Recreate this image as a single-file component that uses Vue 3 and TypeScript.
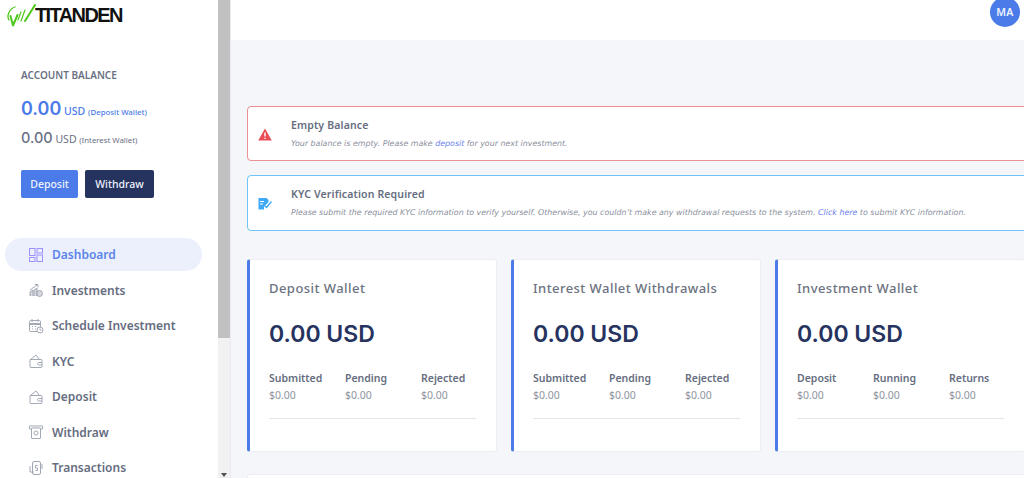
<script setup lang="ts">
interface Stat { label: string; value: string }
interface Card { title: string; amount: string; stats: Stat[] }

const nav = ['Dashboard', 'Investments', 'Schedule Investment', 'KYC', 'Deposit', 'Withdraw', 'Transactions']

const zero = '$0.00'
const cards: Card[] = [
  { title: 'Deposit Wallet', amount: '0.00 USD', stats: [{ label: 'Submitted', value: zero }, { label: 'Pending', value: zero }, { label: 'Rejected', value: zero }] },
  { title: 'Interest Wallet Withdrawals', amount: '0.00 USD', stats: [{ label: 'Submitted', value: zero }, { label: 'Pending', value: zero }, { label: 'Rejected', value: zero }] },
  { title: 'Investment Wallet', amount: '0.00 USD', stats: [{ label: 'Deposit', value: zero }, { label: 'Running', value: zero }, { label: 'Returns', value: zero }] },
]
</script>

<template>
  <div class="page">
    <aside class="sidebar">
      <div class="side-content">
        <div class="logo">
          <svg class="logo-mark" width="29" height="23" viewBox="0 0 29 23" fill="none" stroke="#4fc81e" stroke-linecap="round" stroke-linejoin="round">
            <path d="M8 3C2 5-.5 12 2 16" stroke-width="1.300" />
            <path d="M3.500 12L6 21.500 10.500 11" stroke-width="2" />
            <path d="M11 16l3-8M14 17l4-11" stroke-width="1.200" />
            <path d="M18 17L28 1" stroke-width="2" />
          </svg>
          <span class="logo-text">TITANDEN</span>
        </div>

        <div class="balance">
          <h6 class="balance-title">ACCOUNT BALANCE</h6>
          <div class="bal-main"><b>0.00</b> <span class="cur">USD</span> <small>(Deposit Wallet)</small></div>
          <div class="bal-sub"><b>0.00</b> <span class="cur">USD</span> <small>(Interest Wallet)</small></div>
          <div class="actions">
            <a class="btn btn-blue">Deposit</a>
            <a class="btn btn-navy">Withdraw</a>
          </div>
        </div>

        <nav class="nav">
          <a v-for="(item, i) in nav" :key="item" class="nav-item" :class="{ active: i === 0 }">
            <svg class="nav-icon" width="16" height="16" viewBox="0 0 16 16" fill="none" stroke="currentColor" stroke-width="1">
              <template v-if="i === 0">
                <rect x="1.500" y="1.500" width="5.500" height="7" />
                <rect x="9" y="1.500" width="5.500" height="4.500" />
                <rect x="1.500" y="10.500" width="5.500" height="4" />
                <rect x="9" y="8" width="5.500" height="6.500" />
              </template>
              <template v-else-if="i === 1">
                <path d="M2 14V10l3-2v6M6 14V8l3-2v8" fill="currentColor" fill-opacity=".45" />
                <path d="M2 8l7-5M7 2.500h3v3" />
                <circle cx="11.500" cy="11.500" r="3" fill="currentColor" fill-opacity=".45" />
              </template>
              <template v-else-if="i === 2">
                <rect x="1.500" y="2.500" width="11" height="11" rx="1" />
                <path d="M1.500 6h11" stroke-width="2" />
                <path d="M4 1v3M10 1v3M4 8.500h1M7 8.500h1M4 11h1M7 11h1" />
                <circle cx="12" cy="12" r="3" fill="#fff" />
                <path d="M12 10.500V12h1.500" />
              </template>
              <template v-else-if="i === 3 || i === 4">
                <path d="M2 6.500h11a1 1 0 0 1 1 1v6a1 1 0 0 1-1 1H3a1 1 0 0 1-1-1z" />
                <path d="M2.500 6.500L8 2l3.500 4.500" />
                <path d="M14 9.500h-3.500a1.300 1.300 0 0 0 0 2.500H14" />
              </template>
              <template v-else-if="i === 5">
                <path d="M1.500 2h13v3h-2M1.500 2v3h2" />
                <rect x="3.500" y="4" width="9" height="10.500" rx=".5" />
                <circle cx="8" cy="9" r="2" />
              </template>
              <template v-else>
                <rect x="4.500" y="1.500" width="8" height="13" rx="1.500" />
                <path d="M2 6v6h4M14 4v5" />
                <path d="M9.500 5.500h-2v2.500h2v2.500h-2" />
              </template>
            </svg>
            <span>{{ item }}</span>
          </a>
        </nav>
      </div>
      <div class="scrollbar">
        <div class="thumb"></div>
        <div class="arrow"></div>
      </div>
    </aside>

    <div class="main">
      <header class="topbar">
        <div class="avatar">MA</div>
      </header>

      <div class="content">
        <div class="alert alert-red">
          <svg class="alert-icon" width="14" height="13" viewBox="0 0 14 13"><path d="M7 .5L13.800 12.500H.2z" fill="#ea4d55" /><path d="M7 4.500v4M7 9.700v1.300" stroke="#fff" stroke-width="1.400" /></svg>
          <div>
            <h5 class="alert-title">Empty Balance</h5>
            <p class="alert-text">Your balance is empty. Please make <a>deposit</a> for your next investment.</p>
          </div>
        </div>
        <div class="alert alert-blue">
          <svg class="alert-icon" width="14" height="13" viewBox="0 0 14 13"><path d="M.5 1h8l2 2v2L6 10v2.500H.5z" fill="#3fa9f5" /><path d="M7 9l1.500 1.500L13.500 4.500" fill="none" stroke="#3fa9f5" stroke-width="1.500" /><path d="M2 4.500h4M2 7h3" stroke="#fff" /></svg>
          <div>
            <h5 class="alert-title">KYC Verification Required</h5>
            <p class="alert-text">Please submit the required KYC information to verify yourself. Otherwise, you couldn’t make any withdrawal requests to the system. <a>Click here</a> to submit KYC information.</p>
          </div>
        </div>

        <div class="cards">
          <section v-for="card in cards" :key="card.title" class="card">
            <h4 class="card-title">{{ card.title }}</h4>
            <div class="amount">{{ card.amount }}</div>
            <div class="stats">
              <div v-for="s in card.stats" :key="s.label" class="stat">
                <div class="stat-label">{{ s.label }}</div>
                <div class="stat-value">{{ s.value }}</div>
              </div>
            </div>
            <div class="rule"></div>
          </section>
        </div>

        <div class="next-card"></div>
      </div>
    </div>
  </div>
</template>

<style>
html, body { margin: 0; overflow: hidden; }
</style>

<style scoped>
.page {
  width: 1024px;
  height: 478px;
  overflow: hidden;
  display: flex;
  background: #f4f6fa;
  font-family: "Noto Sans", "DejaVu Sans", sans-serif;
  color: #52596d;
}
h4, h5, h6, p { margin: 0; }

.sidebar {
  flex: 0 0 231px;
  display: flex;
  background: #fff;
  border-right: 1px solid #e9ebf0;
  box-sizing: border-box;
}
.side-content { width: 218px; flex: none; }
.scrollbar {
  flex: 1;
  background: #f1f1f1;
  position: relative;
}
.thumb { height: 338px; background: #c1c1c1; }
.arrow {
  position: absolute;
  left: 3px;
  bottom: 1px;
  border-left: 3.500px solid transparent;
  border-right: 3.500px solid transparent;
  border-top: 4px solid #505050;
}

.logo { display: flex; align-items: center; height: 30px; padding-left: 7px; box-sizing: border-box; }
.logo-mark { flex: none; }
.logo-text {
  font-family: "Liberation Sans", sans-serif;
  font-size: 20px;
  font-weight: 700;
  letter-spacing: -1.600px;
  color: #111;
  margin-left: -1px;
}

.balance { padding: 39px 0 0 21px; }
.balance-title { font-size: 10px; font-weight: 600; color: #6a7184; line-height: 13px; }
.bal-main { margin-top: 17px; color: #4a7be8; font-size: 10.500px; line-height: 20px; white-space: nowrap; font-weight: 500; }
.bal-main b { font-family: Inter, sans-serif; font-size: 18px; font-weight: 600; }
.bal-main small { font-size: 7.800px; }
.bal-sub { margin-top: 6px; color: #6a7184; font-size: 10.500px; line-height: 20px; white-space: nowrap; }
.bal-sub b { font-family: Inter, sans-serif; font-size: 14.500px; font-weight: 500; }
.bal-sub small { font-size: 7.800px; }

.actions { display: flex; gap: 7px; margin-top: 20px; }
.btn {
  height: 28px;
  line-height: 28px;
  border-radius: 2px;
  font-size: 10.500px;
  font-weight: 500;
  color: #eef2fd;
  text-align: center;
  box-sizing: border-box;
}
.btn-blue { width: 57px; background: #4a7be8; }
.btn-navy { width: 69px; background: #26335f; }

.nav { margin: 40px 0 0 5px; width: 197px; display: flex; flex-direction: column; gap: 2.500px; }
.nav-item {
  height: 33px;
  display: flex;
  align-items: center;
  padding-left: 22.500px;
  gap: 8.500px;
  border-radius: 17px;
  font-size: 12px;
  font-weight: 600;
  color: #666d80;
  white-space: nowrap;
}
.nav-item.active { background: #ebf0fc; color: #5b84ea; }
.nav-icon { color: #a3a8b5; flex: none; }
.active .nav-icon { color: #9b92ff; }

.main { flex: 1; min-width: 0; display: flex; flex-direction: column; }
.topbar {
  height: 40px;
  flex: none;
  background: #fff;
  display: flex;
  justify-content: flex-end;
  padding-right: 4px;
  box-sizing: border-box;
}
.avatar {
  width: 30px;
  height: 30px;
  margin-top: -3px;
  border-radius: 50%;
  background: #4a7be8;
  color: #eef2fd;
  font-size: 10.500px;
  font-weight: 600;
  letter-spacing: .3px;
  text-align: center;
  line-height: 30px;
}

.content { padding: 66px 0 0 16px; width: 900px; box-sizing: border-box; }
.alert {
  width: 793px;
  box-sizing: border-box;
  display: flex;
  align-items: center;
  background: #fff;
  border-radius: 4px;
  padding-left: 10px;
  gap: 19px;
}
.alert-icon { flex: none; margin-top: 1px; width: 14px; }
.alert-red { height: 55px; border: 1px solid #ee8f94; }
.alert-blue { height: 56px; margin-top: 14px; border: 1px solid #6fc5f8; }
.alert-title { font-size: 10.500px; font-weight: 600; letter-spacing: .15px; color: #666d80; line-height: 14px; }
.alert-text {
  margin-top: 6px;
  font-family: "DejaVu Sans", sans-serif;
  font-style: italic;
  font-size: 7.900px;
  line-height: 12px;
  color: #8a8f9c;
  white-space: nowrap;
}
.alert-text a { color: #6a7ff0; }

.cards { display: flex; gap: 14px; margin-top: 28px; }
.card {
  flex: 0 0 250px;
  min-width: 0;
  box-sizing: border-box;
  height: 193px;
  background: #fff;
  border: 1px solid #eceef3;
  border-left: 3px solid #4a7be8;
  border-radius: 3px;
  padding: 20px 20px 0 19px;
}
.card-title { font-size: 13px; font-weight: 500; letter-spacing: .45px; color: #6c7280; line-height: 16px; white-space: nowrap; }
.amount { margin-top: 24px; font-family: Inter, sans-serif; font-size: 23px; font-weight: 600; line-height: 28px; color: #26335f; white-space: nowrap; }
.stats { display: grid; grid-template-columns: repeat(3, 56px); column-gap: 20px; margin-top: 23px; }
.stat-label { font-size: 10.500px; font-weight: 600; color: #666d80; line-height: 15px; white-space: nowrap; }
.stat-value { font-size: 10.500px; color: #8f94a0; line-height: 15px; margin-top: 2px; }
.rule { margin-top: 15px; height: 1px; background: #e3e5ea; }

.next-card {
  width: 793px;
  height: 40px;
  margin-top: 22px;
  background: #fff;
  border: 1px solid #eceef3;
  border-radius: 3px;
  box-sizing: border-box;
}
</style>
